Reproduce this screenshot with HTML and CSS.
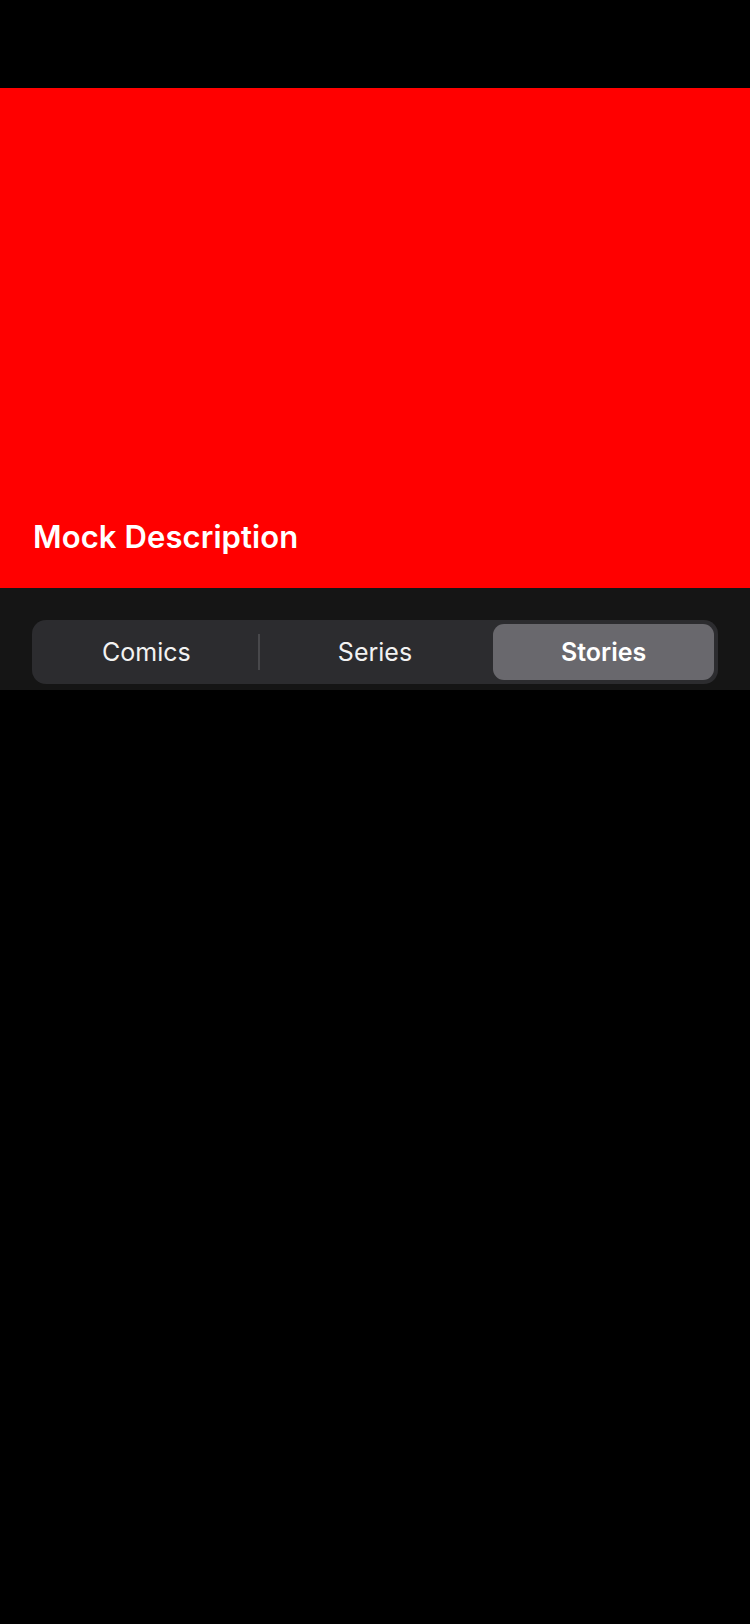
FILE: index.html
```html
<!DOCTYPE html>
<html>
<head>
<meta charset="utf-8">
<link rel="stylesheet" href="styles.css">
</head>
<body>
<div class="page">
  <div class="status"></div>
  <div class="hero">
    <h1 class="title">Mock Description</h1>
  </div>
  <div class="band">
    <div class="segmented">
      <div class="seg with-divider"><span class="label">Comics</span></div>
      <div class="seg"><span class="label">Series</span></div>
      <div class="seg selected"><span class="label">Stories</span></div>
    </div>
  </div>
</div>
</body>
</html>
```

FILE: styles.css
```css
* { box-sizing: border-box; }
html, body {
  margin: 0;
  padding: 0;
  background: #000;
}
body {
  font-family: Inter, "Open Sans", "Liberation Sans", sans-serif;
  color: #fff;
  width: 750px;
  height: 1624px;
}
.page {
  display: flex;
  flex-direction: column;
}
.status {
  height: 88px;
  background: #000;
}
.hero {
  height: 500px;
  background: #ff0000;
  display: flex;
  align-items: flex-end;
  padding: 0 32px 33px 33px;
}
.title {
  margin: 0;
  font-size: 31px;
  font-weight: 600;
  line-height: 36px;
  letter-spacing: 0.1px;
}
.band {
  height: 102px;
  background: #151515;
  padding: 32px 32px 0 32px;
}
.segmented {
  height: 64px;
  background: #2c2c2f;
  border-radius: 14px;
  display: grid;
  grid-template-columns: repeat(3, 1fr);
}
.seg {
  position: relative;
  display: flex;
  align-items: center;
  justify-content: center;
  font-size: 25px;
  font-weight: 400;
  color: #f2f2f2;
}
.with-divider::after {
  content: "";
  position: absolute;
  right: 1px;
  top: 14px;
  width: 2px;
  height: 36px;
  background: #48484b;
}
.seg.selected {
  padding: 4px 4px 4px 4px;
}
.seg.selected .label {
  flex: 1;
  align-self: stretch;
  display: flex;
  align-items: center;
  justify-content: center;
  background: #69686d;
  border-radius: 11px;
  font-weight: 600;
  color: #fff;
}
```
